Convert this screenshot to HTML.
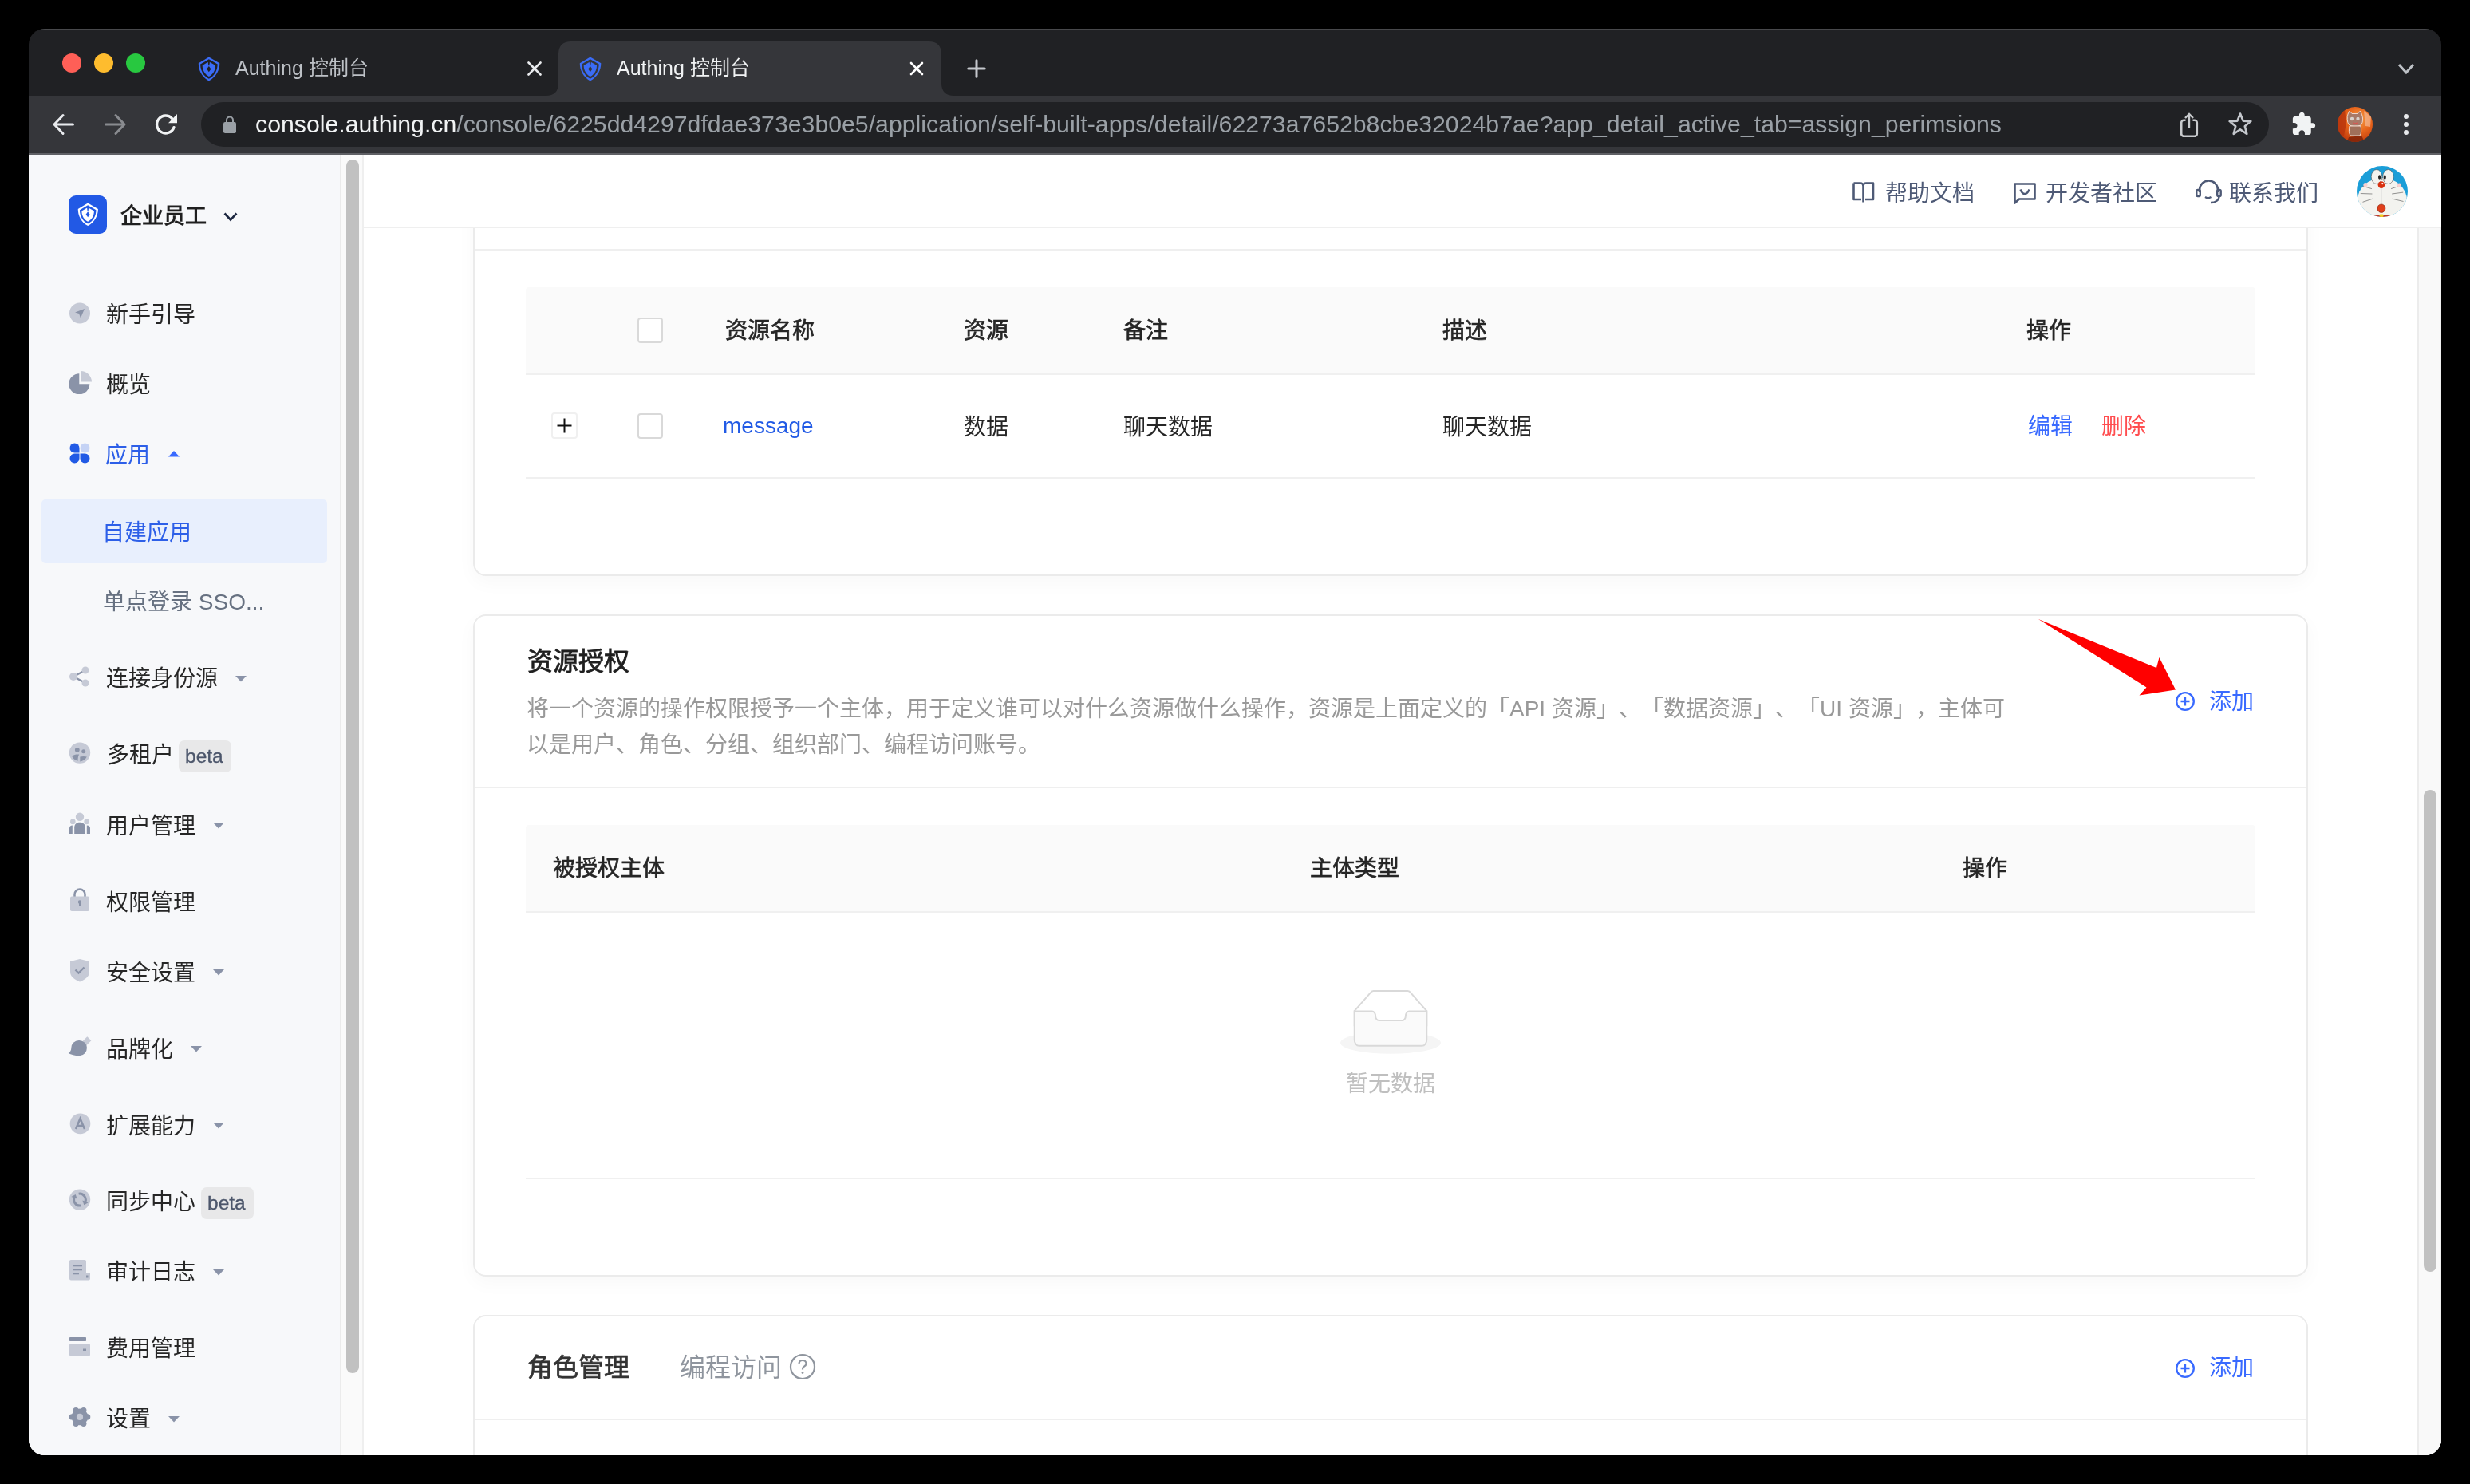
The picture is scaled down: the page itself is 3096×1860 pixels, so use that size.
<!DOCTYPE html>
<html lang="zh-CN"><head><meta charset="utf-8">
<style>
*{box-sizing:border-box;margin:0;padding:0}
html,body{width:3096px;height:1860px;overflow:hidden;background:#000}
body{font-family:"Liberation Sans",sans-serif;position:relative;text-spacing-trim:space-all}
.a{position:absolute}
.t{position:absolute;white-space:pre;line-height:1;will-change:transform}
#win{position:absolute;left:0;top:0;width:3096px;height:1860px;clip-path:inset(36px 36px 36px 36px round 20px);background:#202124}
</style></head>
<body>
<div id="win">
  <!-- tab strip -->
  <div class="a" style="left:36px;top:36px;width:3024px;height:2px;background:#48494c"></div>
  <!-- traffic lights -->
  <div class="a" style="left:78px;top:67px;width:24px;height:24px;border-radius:50%;background:#fe5f57"></div>
  <div class="a" style="left:118px;top:67px;width:24px;height:24px;border-radius:50%;background:#febc2e"></div>
  <div class="a" style="left:158px;top:67px;width:24px;height:24px;border-radius:50%;background:#28c840"></div>


  <!-- inactive tab -->
  <svg class="a" style="left:248px;top:71px" width="28" height="31" viewBox="0 0 28 31"><path d="M13.8 0.5 L27.3 8.3 C27.3 17 23 25.5 13.8 30.5 C4.6 25.5 0.8 17 0.8 8.3 Z" fill="#3b6cf6"/><path d="M13.8 3.3 L24.7 9.6 C24.7 17 21 24.2 13.8 27.8 C6.6 24.2 3.1 17 3.1 9.6 Z" fill="#202124"/><path d="M13.8 6.2 L22 11 C22 17.2 19 22.3 13.8 25 C8.6 22.3 5.7 17.2 5.7 11 Z" fill="#3b6cf6"/><path d="M12.5 5.5 H15.1 L14.3 11.2 H13.3 Z" fill="#202124"/><path d="M13.8 11.9 L16.4 15.6 L13.8 19.3 L11.2 15.6 Z" fill="#202124"/></svg>
  <div class="t" style="left:295px;top:73px;font-size:25px;color:#bdc1c6">Authing 控制台</div>
  <svg class="a" style="left:660px;top:77px" width="20" height="18" viewBox="0 0 20 18"><path d="M2.5 1.5 L17.5 16.5 M17.5 1.5 L2.5 16.5" stroke="#e8eaed" stroke-width="2.6" stroke-linecap="round"/></svg>
  <!-- active tab -->
  <svg class="a" style="left:680px;top:52px" width="520" height="68" viewBox="680 52 520 68"><path d="M684 120 Q700 120 700 104 L700 68 Q700 52 716 52 L1164 52 Q1180 52 1180 68 L1180 104 Q1180 120 1196 120 Z" fill="#35363a"/></svg>
  <svg class="a" style="left:726px;top:71px" width="28" height="31" viewBox="0 0 28 31"><path d="M13.8 0.5 L27.3 8.3 C27.3 17 23 25.5 13.8 30.5 C4.6 25.5 0.8 17 0.8 8.3 Z" fill="#3b6cf6"/><path d="M13.8 3.3 L24.7 9.6 C24.7 17 21 24.2 13.8 27.8 C6.6 24.2 3.1 17 3.1 9.6 Z" fill="#35363a"/><path d="M13.8 6.2 L22 11 C22 17.2 19 22.3 13.8 25 C8.6 22.3 5.7 17.2 5.7 11 Z" fill="#3b6cf6"/><path d="M12.5 5.5 H15.1 L14.3 11.2 H13.3 Z" fill="#35363a"/><path d="M13.8 11.9 L16.4 15.6 L13.8 19.3 L11.2 15.6 Z" fill="#35363a"/></svg>
  <div class="t" style="left:773px;top:73px;font-size:25px;color:#f1f3f4">Authing 控制台</div>
  <svg class="a" style="left:1139px;top:77px" width="20" height="18" viewBox="0 0 20 18"><path d="M3 2 L17 16 M17 2 L3 16" stroke="#ffffff" stroke-width="2.6" stroke-linecap="round"/></svg>
  <!-- new tab plus -->
  <svg class="a" style="left:1212px;top:74px" width="24" height="24" viewBox="0 0 24 24"><path d="M12 1.8 V22.2 M1.8 12 H22.2" stroke="#c4c7cc" stroke-width="3" stroke-linecap="round"/></svg>
  <!-- tab search chevron -->
  <svg class="a" style="left:3005px;top:79px" width="22" height="15" viewBox="0 0 22 15"><path d="M2 2 L11 12 L20 2" fill="none" stroke="#bdc1c6" stroke-width="3"/></svg>

  <!-- toolbar -->
  <div class="a" style="left:36px;top:120px;width:3024px;height:72px;background:#35363a"></div>
  <div class="a" style="left:36px;top:192px;width:3024px;height:2px;background:#5f6065"></div>


  <!-- nav -->
  <svg class="a" style="left:64px;top:141px" width="32" height="30" viewBox="0 0 32 30"><path d="M27.5 15 H4.5 M15 3.5 L4 15 L15 26.5" fill="none" stroke="#e8eaed" stroke-width="3" stroke-linecap="round" stroke-linejoin="round"/></svg>
  <svg class="a" style="left:128px;top:141px" width="32" height="30" viewBox="0 0 32 30"><path d="M4.5 15 H27.5 M17 3.5 L28 15 L17 26.5" fill="none" stroke="#898b8f" stroke-width="3" stroke-linecap="round" stroke-linejoin="round"/></svg>
  <svg class="a" style="left:192px;top:140px" width="32" height="32" viewBox="0 0 32 32"><path d="M23.9 8.8 A11 11 0 1 0 26 19.6" fill="none" stroke="#f1f3f4" stroke-width="3.3" stroke-linecap="round"/><path d="M30 2.9 V14.2 H19 Z" fill="#f1f3f4"/></svg>
  <!-- omnibox -->
  <div class="a" style="left:252px;top:128px;width:2592px;height:56px;border-radius:28px;background:#202124"></div>
  <svg class="a" style="left:279px;top:145px" width="18" height="23" viewBox="0 0 18 23"><path d="M5 9 V5.5 A4 4 0 0 1 13 5.5 V9" fill="none" stroke="#9aa0a6" stroke-width="2"/><rect x="1" y="8" width="16" height="14" rx="2.2" fill="#9aa0a6"/></svg>
  <div class="t" style="left:320px;top:141px;font-size:30.25px;color:#f1f3f4">console.authing.cn<span style="color:#9aa0a6">/console/6225dd4297dfdae373e3b0e5/application/self-built-apps/detail/62273a7652b8cbe32024b7ae?app_detail_active_tab=assign_perimsions</span></div>
  <!-- share -->
  <svg class="a" style="left:2731px;top:141px" width="26" height="31" viewBox="0 0 26 31"><path d="M8.5 9.8 H6.2 A3 3 0 0 0 3.2 12.8 V26.8 A3 3 0 0 0 6.2 29.8 H19.8 A3 3 0 0 0 22.8 26.8 V12.8 A3 3 0 0 0 19.8 9.8 H17.5" fill="none" stroke="#c8cacd" stroke-width="2.6"/><path d="M13 20 V2.2 M8 7 L13 2 L18 7" fill="none" stroke="#c8cacd" stroke-width="2.4"/></svg>
  <!-- star -->
  <svg class="a" style="left:2792px;top:140px" width="32" height="31" viewBox="0 0 32 31"><path d="M16 2.5 L19.6 11.6 L29.3 12.1 L21.8 18.3 L24.3 27.8 L16 22.4 L7.7 27.8 L10.2 18.3 L2.7 12.1 L12.4 11.6 Z" fill="none" stroke="#c4c7cc" stroke-width="2.6" stroke-linejoin="round"/></svg>
  <!-- puzzle -->
  <svg class="a" style="left:2873px;top:140px" width="30" height="31" viewBox="1.5 0.5 22 23"><path d="M20.5 11H19V7c0-1.1-.9-2-2-2h-4V3.5C13 2.12 11.88 1 10.5 1S8 2.12 8 3.5V5H4c-1.1 0-1.99.9-1.99 2v3.8H3.5c1.49 0 2.7 1.21 2.7 2.7s-1.21 2.7-2.7 2.7H2V20c0 1.1.9 2 2 2h3.8v-1.5c0-1.49 1.21-2.7 2.7-2.7 1.490 0 2.7 1.21 2.7 2.7V22H17c1.1 0 2-.9 2-2v-4h1.5c1.38 0 2.5-1.120 2.5-2.5S21.88 11 20.5 11z" fill="#f1f3f4"/></svg>
  <!-- profile -->
  <svg class="a" style="left:2930px;top:134px" width="44" height="44" viewBox="0 0 44 44"><defs><clipPath id="pc"><circle cx="22" cy="22" r="22"/></clipPath><radialGradient id="pg" cx="60%" cy="35%" r="70%"><stop offset="0" stop-color="#f5a048"/><stop offset="0.5" stop-color="#e8661c"/><stop offset="1" stop-color="#c03a0c"/></radialGradient></defs><g clip-path="url(#pc)"><rect width="44" height="44" fill="url(#pg)"/><path d="M0 6 L9 4 L11 20 L8 36 L0 40 Z" fill="#b8340c" opacity=".8"/><path d="M14 38 L30 36 L34 44 L12 44 Z" fill="#7a2008" opacity=".8"/><path d="M33 5 L42 12 L41 25 L35 24 Z" fill="#f6c7a8" opacity=".6"/><path d="M13 9 L15 5 L18 8.5 H25 L28.5 5 L30.5 9.5 C32 13 32 19 30 22 C28 25 16 25 14 22 C12 19 11.5 13 13 9 Z" fill="#a87a68" stroke="#f1d8cc" stroke-width="1"/><path d="M15 24 C14 28 14 33 16 36 H28 C30 33 30 28 29 24 Z" fill="#a0705a" stroke="#f1d8cc" stroke-width="1"/><circle cx="18" cy="15" r="2.2" fill="#d9d2cc"/><circle cx="25.5" cy="15" r="2.2" fill="#d9d2cc"/><path d="M19 20 Q22 22 25 20" stroke="#e05050" stroke-width="1" fill="none"/></g></svg>
  <!-- kebab -->
  <div class="a" style="left:3013px;top:143px;width:6px;height:6px;border-radius:50%;background:#e8eaed"></div>
  <div class="a" style="left:3013px;top:153px;width:6px;height:6px;border-radius:50%;background:#e8eaed"></div>
  <div class="a" style="left:3013px;top:163px;width:6px;height:6px;border-radius:50%;background:#e8eaed"></div>

  <!-- content -->
  <div class="a" style="left:36px;top:194px;width:3024px;height:1630px;background:#fff"></div>

  <!-- main scrollbar -->
  <div class="a" style="left:3030px;top:286px;width:30px;height:1538px;background:#f9f9f9"></div>
  <div class="a" style="left:3030px;top:286px;width:2px;height:1538px;background:#ececec"></div>
  <div class="a" style="left:3058px;top:286px;width:2px;height:1538px;background:#f0f0f0"></div>
  <div class="a" style="left:3038px;top:990px;width:16px;height:604px;border-radius:8px;background:#c1c1c1"></div>

  <!-- card 1 -->
  <div class="a" style="left:593px;top:200px;width:2300px;height:522px;border:2px solid #ebebeb;border-radius:16px;background:#fff;box-shadow:0 8px 24px rgba(0,0,0,.03)"></div>
  <div class="a" style="left:456px;top:194px;width:2604px;height:90px;background:#fff"></div>
  <!-- header -->
  <div class="a" style="left:456px;top:284px;width:2604px;height:2px;background:#efefef"></div>
  <svg class="a" style="left:2321px;top:226px" width="30" height="30" viewBox="0 0 30 30"><path d="M2.5 3.5 H11 C13 3.5 14.5 5 14.5 7 V27.5 M14.5 27.5 V7 C14.5 5 16 3.5 18 3.5 H27 V24 H17 M2.5 3.5 V24 H12" fill="none" stroke="#4e5a76" stroke-width="2.6" stroke-linejoin="round"/></svg>
  <div class="t" style="left:2362.5px;top:228.5px;font-size:28px;color:#4e5a76;font-weight:400;">帮助文档</div>

  <svg class="a" style="left:2523px;top:227px" width="30" height="30" viewBox="0 0 30 30"><path d="M2.5 27.5 V3.5 H27.5 V22.5 H8 Z" fill="none" stroke="#4e5a76" stroke-width="2.6" stroke-linejoin="round"/><path d="M9.5 10.5 C11 14.5 13 16 15 16 C17 16 19 14.5 20.5 10.5" fill="none" stroke="#4e5a76" stroke-width="2.4"/></svg>
  <div class="t" style="left:2564px;top:228.5px;font-size:28px;color:#4e5a76;font-weight:400;">开发者社区</div>

  <svg class="a" style="left:2752px;top:225px" width="33" height="32" viewBox="0 0 33 32"><path d="M5 16 V13 A11.5 11.5 0 0 1 28 13 V16" fill="none" stroke="#4e5a76" stroke-width="2.6"/><rect x="1.3" y="13" width="4.5" height="8" rx="1.5" fill="none" stroke="#4e5a76" stroke-width="2.4"/><rect x="27.2" y="13" width="4.5" height="8" rx="1.5" fill="none" stroke="#4e5a76" stroke-width="2.4"/><path d="M29.5 21 C29.5 26 25 29 19 29" fill="none" stroke="#4e5a76" stroke-width="2.4"/><path d="M12 22 C14 23.5 17 23.5 19.5 22" fill="none" stroke="#4e5a76" stroke-width="2.2"/></svg>
  <div class="t" style="left:2794px;top:228.5px;font-size:28px;color:#4e5a76;font-weight:400;">联系我们</div>

  <svg class="a" style="left:2954px;top:208px" width="64" height="64" viewBox="0 0 64 64"><defs><clipPath id="dc"><circle cx="32" cy="32" r="32"/></clipPath></defs><g clip-path="url(#dc)"><rect width="64" height="64" fill="#1b9ed8"/><ellipse cx="32" cy="43" rx="31" ry="28" fill="#f3f3ef"/><rect x="20" y="62" width="24" height="2" fill="#c0392b"/><ellipse cx="25" cy="13.5" rx="6.8" ry="9" fill="#f3f3ef" stroke="#555" stroke-width="0.6"/><ellipse cx="39.5" cy="13.5" rx="6.8" ry="9" fill="#f3f3ef" stroke="#555" stroke-width="0.6"/><ellipse cx="28.6" cy="14" rx="1.6" ry="2.8" fill="#222"/><ellipse cx="35.3" cy="14" rx="1.6" ry="2.8" fill="#222"/><path d="M30.6 27.5 V48.5" stroke="#555" stroke-width="0.8"/><circle cx="30.9" cy="23.6" r="4.3" fill="#d8300f"/><circle cx="32.3" cy="22.2" r="1.1" fill="#fff"/><ellipse cx="30.9" cy="53.2" rx="5" ry="5.2" fill="#e0401c" stroke="#7a1d0a" stroke-width="0.6"/><path d="M7.5 25.3 L18.9 28.6 M4.8 34.5 L19.4 35 M7.5 45.3 L19.9 41.2 M43.1 28.6 L56.6 24.2 M44.2 35 L58.2 33.1 M44.7 41.2 L58.5 44.5" stroke="#666" stroke-width="0.7"/><circle cx="11" cy="23.5" r="2.6" fill="#f7d0d0"/><circle cx="53.5" cy="24" r="2.6" fill="#f7d0d0"/><rect x="28.5" y="60.5" width="5" height="3.5" rx="1.2" fill="#f0d020"/></g></svg>

  <div class="a" style="left:595px;top:312px;width:2296px;height:2px;background:#efefef"></div>
  <div class="a" style="left:659px;top:360px;width:2168px;height:110px;background:#fafafa;border-bottom:2px solid #f0f0f0;border-radius:4px 4px 0 0"></div>
  <div class="a" style="left:799px;top:398px;width:32px;height:32px;border:2px solid #d9d9d9;border-radius:4px;background:#fff"></div>
  <div class="t" style="left:909px;top:401px;font-size:28px;color:#262626;font-weight:400;-webkit-text-stroke:0.7px #262626;">资源名称</div>
  <div class="t" style="left:1208px;top:401px;font-size:28px;color:#262626;font-weight:400;-webkit-text-stroke:0.7px #262626;">资源</div>
  <div class="t" style="left:1408px;top:401px;font-size:28px;color:#262626;font-weight:400;-webkit-text-stroke:0.7px #262626;">备注</div>
  <div class="t" style="left:1808px;top:401px;font-size:28px;color:#262626;font-weight:400;-webkit-text-stroke:0.7px #262626;">描述</div>
  <div class="t" style="left:2540px;top:401px;font-size:28px;color:#262626;font-weight:400;-webkit-text-stroke:0.7px #262626;">操作</div>

  <div class="a" style="left:691px;top:517px;width:33px;height:33px;border:2px solid #f0f0f0;border-radius:4px;background:#fff"></div>
  <svg class="a" style="left:698px;top:524px" width="19" height="19" viewBox="0 0 19 19"><path d="M9.5 0.5 V18.5 M0.5 9.5 H18.5" stroke="#111" stroke-width="2"/></svg>
  <div class="a" style="left:799px;top:518px;width:32px;height:32px;border:2px solid #d9d9d9;border-radius:4px;background:#fff"></div>
  <div class="t" style="left:906px;top:520px;font-size:28px;color:#215ae5;font-weight:400;">message</div>
  <div class="t" style="left:1208px;top:522px;font-size:28px;color:#262626;font-weight:400;">数据</div>
  <div class="t" style="left:1408px;top:522px;font-size:28px;color:#262626;font-weight:400;">聊天数据</div>
  <div class="t" style="left:1808px;top:522px;font-size:28px;color:#262626;font-weight:400;">聊天数据</div>
  <div class="t" style="left:2542px;top:521px;font-size:28px;color:#396aff;font-weight:400;">编辑</div>
  <div class="t" style="left:2634px;top:521px;font-size:28px;color:#ff4d4f;font-weight:400;">删除</div>

  <div class="a" style="left:659px;top:598px;width:2168px;height:2px;background:#f0f0f0"></div>

  <!-- card 2 -->
  <div class="a" style="left:593px;top:770px;width:2300px;height:830px;border:2px solid #ebebeb;border-radius:16px;background:#fff;box-shadow:0 8px 24px rgba(0,0,0,.03)"></div>
  <div class="t" style="left:661px;top:813px;font-size:32px;color:#1f1f1f;font-weight:400;-webkit-text-stroke:0.8px #1f1f1f;">资源授权</div>

  <div class="t" style="left:660px;top:875px;font-size:28px;color:#999;font-weight:400;">将一个资源的操作权限授予一个主体，用于定义谁可以对什么资源做什么操作，资源是上面定义的「API 资源」、「数据资源」、「UI 资源」，主体可</div>

  <div class="t" style="left:660px;top:920px;font-size:28px;color:#999;font-weight:400;">以是用户、角色、分组、组织部门、编程访问账号。</div>

  <svg class="a" style="left:2726px;top:866px" width="26" height="26" viewBox="0 0 26 26"><circle cx="13" cy="13" r="10.8" fill="none" stroke="#396aff" stroke-width="2.3"/><path d="M13 7.5 V18.5 M7.5 13 H18.5" stroke="#396aff" stroke-width="2.3"/></svg>
  <div class="t" style="left:2769px;top:866px;font-size:28px;color:#396aff;font-weight:400;">添加</div>

  <div class="a" style="left:595px;top:986px;width:2296px;height:2px;background:#efefef"></div>
  <div class="a" style="left:659px;top:1034px;width:2168px;height:110px;background:#fafafa;border-bottom:2px solid #f0f0f0;border-radius:4px 4px 0 0"></div>
  <div class="t" style="left:693px;top:1075px;font-size:28px;color:#262626;font-weight:400;-webkit-text-stroke:0.7px #262626;">被授权主体</div>
  <div class="t" style="left:1642px;top:1075px;font-size:28px;color:#262626;font-weight:400;-webkit-text-stroke:0.7px #262626;">主体类型</div>
  <div class="t" style="left:2460px;top:1075px;font-size:28px;color:#262626;font-weight:400;-webkit-text-stroke:0.7px #262626;">操作</div>

  <svg class="a" style="left:1680px;top:1240px" width="126" height="80.7" viewBox="0 0 64 41"><g transform="translate(0 1)" fill="none" fill-rule="evenodd"><ellipse fill="#f5f5f5" cx="32" cy="33" rx="32" ry="7"/><g fill-rule="nonzero" stroke="#d9d9d9"><path d="M55 12.76L44.854 1.258C44.367.474 43.656 0 42.907 0H21.093c-.749 0-1.46.474-1.947 1.257L9 12.761V22h46v-9.24z"/><path d="M41.613 15.931c0-1.605.994-2.93 2.227-2.931H55v18.137C55 33.26 53.68 35 52.05 35h-40.1C10.32 35 9 33.259 9 31.137V13h11.16c1.233 0 2.227 1.323 2.227 2.928v.022c0 1.605 1.005 2.901 2.237 2.901h14.752c1.232 0 2.237-1.308 2.237-2.913v-.007z" fill="#fafafa"/></g></g></svg>
  <div class="t" style="left:1687px;top:1345px;font-size:28px;color:#bfbfbf;font-weight:400;">暂无数据</div>

  <div class="a" style="left:659px;top:1476px;width:2168px;height:2px;background:#f0f0f0"></div>

  <!-- card 3 -->
  <div class="a" style="left:593px;top:1648px;width:2300px;height:400px;border:2px solid #ebebeb;border-radius:16px;background:#fff"></div>
  <div class="t" style="left:661px;top:1698px;font-size:32px;color:#333;font-weight:400;-webkit-text-stroke:0.7px #333;">角色管理</div>
  <div class="t" style="left:852px;top:1698px;font-size:32px;color:#8f959e;font-weight:400;">编程访问</div>

  <svg class="a" style="left:989px;top:1696px" width="34" height="34" viewBox="0 0 34 34"><circle cx="17" cy="17" r="15" fill="none" stroke="#8f959e" stroke-width="2.2"/><path d="M12.5 13.5 C12.5 10.5 14.5 9 17 9 C19.5 9 21.5 10.7 21.5 13 C21.5 15.5 19.5 16.3 18 17.3 C17.2 17.9 17 18.5 17 20.5" fill="none" stroke="#8f959e" stroke-width="2.2"/><circle cx="17" cy="24.5" r="1.4" fill="#8f959e"/></svg>
  <svg class="a" style="left:2726px;top:1702px" width="26" height="26" viewBox="0 0 26 26"><circle cx="13" cy="13" r="10.8" fill="none" stroke="#396aff" stroke-width="2.3"/><path d="M13 7.5 V18.5 M7.5 13 H18.5" stroke="#396aff" stroke-width="2.3"/></svg>
  <div class="t" style="left:2769px;top:1701px;font-size:28px;color:#396aff;font-weight:400;">添加</div>

  <div class="a" style="left:595px;top:1778px;width:2296px;height:2px;background:#efefef"></div>

  <!-- red annotation arrow -->
  <svg class="a" style="left:0;top:0" width="3096" height="1860"><polygon points="2555,776 2703,837 2706.5,824 2727,864.5 2681.5,871.5 2690.5,861.5" fill="#ff0000"/></svg>

  <!-- sidebar -->
  <div class="a" style="left:36px;top:194px;width:390px;height:1630px;background:#f7f8fa"></div>
  <div class="a" style="left:426px;top:194px;width:2px;height:1630px;background:#ebebeb"></div>
  <div class="a" style="left:428px;top:194px;width:26px;height:1630px;background:#fafafa"></div>
  <div class="a" style="left:454px;top:194px;width:2px;height:1630px;background:#efefef"></div>
  <div class="a" style="left:434px;top:200px;width:16px;height:1521px;border-radius:8px;background:#c1c1c1"></div>
  <!-- logo -->
  <div class="a" style="left:86px;top:245px;width:48px;height:48px;border-radius:9px;background:#2259e5"></div>
  <svg class="a" style="left:97px;top:253.5px" width="26.6" height="29.5" viewBox="0 0 28 31"><path d="M13.8 0.5 L27.3 8.3 C27.3 17 23 25.5 13.8 30.5 C4.6 25.5 0.8 17 0.8 8.3 Z" fill="#fff"/><path d="M13.8 3.3 L24.7 9.6 C24.7 17 21 24.2 13.8 27.8 C6.6 24.2 3.1 17 3.1 9.6 Z" fill="#2259e5"/><path d="M13.8 6.2 L22 11 C22 17.2 19 22.3 13.8 25 C8.6 22.3 5.7 17.2 5.7 11 Z" fill="#fff"/><path d="M12.5 5.5 H15.1 L14.3 11.2 H13.3 Z" fill="#2259e5"/><path d="M13.8 11.9 L16.4 15.6 L13.8 19.3 L11.2 15.6 Z" fill="#2259e5"/></svg>
  <div class="t" style="left:151px;top:257.5px;font-size:27px;color:#1f1f1f;font-weight:600;">企业员工</div>
  <svg class="a" style="left:280px;top:266px" width="18" height="12" viewBox="0 0 18 12"><path d="M1.5 1.5 L9 9.5 L16.5 1.5" fill="none" stroke="#1d2740" stroke-width="2.6"/></svg>
  <div class="a" style="left:52px;top:626px;width:358px;height:80px;border-radius:5px;background:#e8effd"></div>
  <div class="t" style="left:133px;top:381px;font-size:28px;color:#262626;font-weight:400;">新手引导</div>
  <div class="t" style="left:133px;top:469px;font-size:28px;color:#262626;font-weight:400;">概览</div>
  <div class="t" style="left:132px;top:557px;font-size:28px;color:#2d5fe8;font-weight:400;">应用</div>
  <div class="t" style="left:128px;top:654px;font-size:28px;color:#2d5fe8;font-weight:400;">自建应用</div>
  <div class="t" style="left:129px;top:741px;font-size:28px;color:#677181;font-weight:400;">单点登录 SSO...</div>
  <div class="t" style="left:133px;top:837px;font-size:28px;color:#262626;font-weight:400;">连接身份源</div>
  <div class="t" style="left:134px;top:933px;font-size:28px;color:#262626;font-weight:400;">多租户</div>
  <div class="t" style="left:133px;top:1022px;font-size:28px;color:#262626;font-weight:400;">用户管理</div>
  <div class="t" style="left:133px;top:1118px;font-size:28px;color:#262626;font-weight:400;">权限管理</div>
  <div class="t" style="left:133px;top:1206px;font-size:28px;color:#262626;font-weight:400;">安全设置</div>
  <div class="t" style="left:133px;top:1302px;font-size:28px;color:#262626;font-weight:400;">品牌化</div>
  <div class="t" style="left:133px;top:1398px;font-size:28px;color:#262626;font-weight:400;">扩展能力</div>
  <div class="t" style="left:133px;top:1493px;font-size:28px;color:#262626;font-weight:400;">同步中心</div>
  <div class="t" style="left:133px;top:1581px;font-size:28px;color:#262626;font-weight:400;">审计日志</div>
  <div class="t" style="left:133px;top:1677px;font-size:28px;color:#262626;font-weight:400;">费用管理</div>
  <div class="t" style="left:133px;top:1765px;font-size:28px;color:#262626;font-weight:400;">设置</div>
  <svg class="a" style="left:211px;top:565px" width="14" height="8" viewBox="0 0 14 8"><path d="M0 7.5 H14 L7 0 Z" fill="#396aff"/></svg>
  <svg class="a" style="left:295px;top:847px" width="14" height="8" viewBox="0 0 14 8"><path d="M0 0 H14 L7 7.5 Z" fill="#8a93a8"/></svg>
  <svg class="a" style="left:267px;top:1031px" width="14" height="8" viewBox="0 0 14 8"><path d="M0 0 H14 L7 7.5 Z" fill="#8a93a8"/></svg>
  <svg class="a" style="left:267px;top:1215px" width="14" height="8" viewBox="0 0 14 8"><path d="M0 0 H14 L7 7.5 Z" fill="#8a93a8"/></svg>
  <svg class="a" style="left:239px;top:1311px" width="14" height="8" viewBox="0 0 14 8"><path d="M0 0 H14 L7 7.5 Z" fill="#8a93a8"/></svg>
  <svg class="a" style="left:267px;top:1407px" width="14" height="8" viewBox="0 0 14 8"><path d="M0 0 H14 L7 7.5 Z" fill="#8a93a8"/></svg>
  <svg class="a" style="left:267px;top:1591px" width="14" height="8" viewBox="0 0 14 8"><path d="M0 0 H14 L7 7.5 Z" fill="#8a93a8"/></svg>
  <svg class="a" style="left:211px;top:1775px" width="14" height="8" viewBox="0 0 14 8"><path d="M0 0 H14 L7 7.5 Z" fill="#8a93a8"/></svg>
  <div class="a" style="left:224px;top:928px;width:66px;height:40px;border-radius:7px;background:#e8e8e9"></div>
  <div class="t" style="left:232px;top:936px;font-size:24.5px;color:#4c566b;font-weight:400;-webkit-text-stroke:0.3px #4c566b;">beta</div>
  <div class="a" style="left:252px;top:1488px;width:66px;height:40px;border-radius:7px;background:#e8e8e9"></div>
  <div class="t" style="left:260px;top:1496px;font-size:24.5px;color:#4c566b;font-weight:400;-webkit-text-stroke:0.3px #4c566b;">beta</div>

  <svg class="a" style="left:86px;top:378.5px" width="28" height="28" viewBox="0 0 28 28"><circle cx="14" cy="13.5" r="13" fill="#c6cad6"/><path d="M20 8 L8 12.5 L13 14 L15 19.5 Z" fill="#8a93a8"/></svg>
  <svg class="a" style="left:86px;top:464px" width="30" height="30" viewBox="0 0 30 30"><path d="M13.3 4.3 A13 13 0 1 0 26.3 17.3 H13.3 Z" fill="#8a93a8"/><path d="M15.2 1 A13.8 13.8 0 0 1 29 14.6 H15.2 Z" fill="#c6cad6"/></svg>
  <svg class="a" style="left:86px;top:554px" width="28" height="28" viewBox="0 0 28 28"><path d="M7.5 1.5 A6 6 0 0 1 13.5 7.5 V13.5 H7.5 A6 6 0 0 1 7.5 1.5 Z" fill="#215ae5"/><circle cx="20.5" cy="7.5" r="6" fill="#c5d3f5"/><path d="M7.5 26.5 A6 6 0 0 1 7.5 14.5 H13.5 V20.5 A6 6 0 0 1 7.5 26.5 Z" fill="#215ae5"/><path d="M20.5 26.5 A6 6 0 0 0 20.5 14.5 H14.5 V20.5 A6 6 0 0 0 20.5 26.5 Z" fill="#215ae5"/></svg>
  <svg class="a" style="left:86px;top:834px" width="28" height="28" viewBox="0 0 28 28"><path d="M6 14 L21 6 M6 14 L21 22" stroke="#8a93a8" stroke-width="2.5"/><circle cx="6" cy="14" r="5" fill="#c6cad6"/><circle cx="21" cy="6" r="4.5" fill="#c6cad6"/><circle cx="21" cy="22" r="4.5" fill="#c6cad6"/></svg>
  <svg class="a" style="left:86px;top:930px" width="28" height="28" viewBox="0 0 28 28"><circle cx="14" cy="13.6" r="13.2" fill="#c6cad6"/><circle cx="10.8" cy="9.8" r="2.9" fill="#8a93a8"/><circle cx="18.7" cy="11.7" r="2.5" fill="#8a93a8"/><path d="M4.2 17.6 C6.5 15.8 10 15.3 13.2 15.6 C12 17.5 11.5 20.5 11.6 23.8 C7.8 23 5.3 20.8 4.2 17.6 Z" fill="#8a93a8"/><path d="M14.3 18.6 C17 17.6 20.5 17.7 22.8 18.5 C21.2 21.8 18 24 14.3 24.4 Z" fill="#8a93a8"/></svg>
  <svg class="a" style="left:86px;top:1017px" width="28" height="30" viewBox="0 0 28 30"><circle cx="14" cy="6.8" r="5.2" fill="#c6cad6"/><circle cx="5.3" cy="12.9" r="3.3" fill="#c6cad6"/><circle cx="22.6" cy="12.9" r="3.3" fill="#c6cad6"/><path d="M7.2 28 V20.5 C7.2 16 10 13.8 14 13.8 C18 13.8 20.9 16 20.9 20.5 V28 Z" fill="#8a93a8"/><path d="M1 28 V21 C1 19 2.5 17.8 4.8 17.6 V28 Z" fill="#8a93a8"/><path d="M27 28 V21 C27 19 25.5 17.8 22.8 17.6 V28 Z" fill="#8a93a8"/></svg>
  <svg class="a" style="left:87px;top:1113px" width="26" height="30" viewBox="0 0 26 30"><path d="M6.5 12 V8 A6.5 6.5 0 0 1 19.5 8 V12" fill="none" stroke="#8a93a8" stroke-width="2.5"/><rect x="1" y="10.5" width="24" height="18.5" rx="2" fill="#c6cad6"/><circle cx="13" cy="17.5" r="2.2" fill="#8a93a8"/><rect x="12" y="18" width="2" height="4.5" fill="#8a93a8"/></svg>
  <svg class="a" style="left:87px;top:1201px" width="26" height="30" viewBox="0 0 26 30"><path d="M13 1 L25 4 V17 C25 23 19.5 27 13 29.5 C6.5 27 1 23 1 17 V4 Z" fill="#c6cad6"/><path d="M7.5 14.5 L11.5 18.5 L18.5 11.5" fill="none" stroke="#8a93a8" stroke-width="2.4"/></svg>
  <svg class="a" style="left:85px;top:1298px" width="30" height="28" viewBox="0 0 30 28"><path d="M18.3 7.3 L24.3 1.3 L29.3 6.3 L23.3 12.3 Z" fill="#c6cad6"/><path d="M13.9 5.9 A9.7 9.7 0 1 1 14.5 25.3 C10 25.5 4 24 0.7 22 C3.5 20.5 4.3 18 4.3 15.6 A9.6 9.6 0 0 1 13.9 5.9 Z" fill="#8a93a8"/></svg>
  <svg class="a" style="left:87px;top:1395px" width="27" height="27" viewBox="0 0 27 27"><circle cx="13.5" cy="13.4" r="12.8" fill="#c6cad6"/><path d="M8 20 L13.5 7 L19 20 M9.9 16 H17.1" fill="none" stroke="#8a93a8" stroke-width="2.5"/></svg>
  <svg class="a" style="left:86px;top:1490px" width="28" height="28" viewBox="0 0 28 28"><circle cx="14" cy="13.6" r="13.2" fill="#c6cad6"/><path d="M12.7 6.2 A7.5 7.5 0 0 1 20.2 17.5" fill="none" stroke="#8a93a8" stroke-width="3"/><path d="M17.4 14.6 L24.6 17.3 L19.3 20.2 Z" fill="#8a93a8"/><path d="M15.3 21 A7.5 7.5 0 0 1 7.6 9.9" fill="none" stroke="#8a93a8" stroke-width="3"/><path d="M10.6 12.6 L3.4 9.9 L8.7 7 Z" fill="#8a93a8"/></svg>
  <svg class="a" style="left:86px;top:1578px" width="28" height="28" viewBox="0 0 28 28"><path d="M1 3 A2 2 0 0 1 3 1 H20 A2 2 0 0 1 22 3 V17 H27 V24.5 A2 2 0 0 1 25 26.5 H3 A2 2 0 0 1 1 24.5 Z" fill="#c6cad6"/><rect x="6" y="7" width="11" height="2.3" fill="#8a93a8"/><rect x="6" y="12" width="11" height="2.3" fill="#8a93a8"/><rect x="6" y="17" width="7" height="2.3" fill="#8a93a8"/><rect x="22" y="20.5" width="2.5" height="3" fill="#8a93a8"/></svg>
  <svg class="a" style="left:86px;top:1675px" width="28" height="26" viewBox="0 0 28 26"><rect x="1" y="1" width="21" height="5" rx="0.8" fill="#8a93a8"/><rect x="1" y="9" width="26" height="15.5" rx="1.5" fill="#c6cad6"/><rect x="18" y="15.5" width="4" height="2.5" fill="#8a93a8"/></svg>
  <svg class="a" style="left:86px;top:1763px" width="28" height="27" viewBox="0 0 28 27"><circle cx="14" cy="12.9" r="10.3" fill="#8a93a8"/><circle cx="23.70" cy="12.90" r="3.6" fill="#8a93a8"/><circle cx="18.85" cy="21.30" r="3.6" fill="#8a93a8"/><circle cx="9.15" cy="21.30" r="3.6" fill="#8a93a8"/><circle cx="4.30" cy="12.90" r="3.6" fill="#8a93a8"/><circle cx="9.15" cy="4.50" r="3.6" fill="#8a93a8"/><circle cx="18.85" cy="4.50" r="3.6" fill="#8a93a8"/><circle cx="14" cy="12.9" r="4.1" fill="#c6cad6"/></svg>
</div>
</body></html>
